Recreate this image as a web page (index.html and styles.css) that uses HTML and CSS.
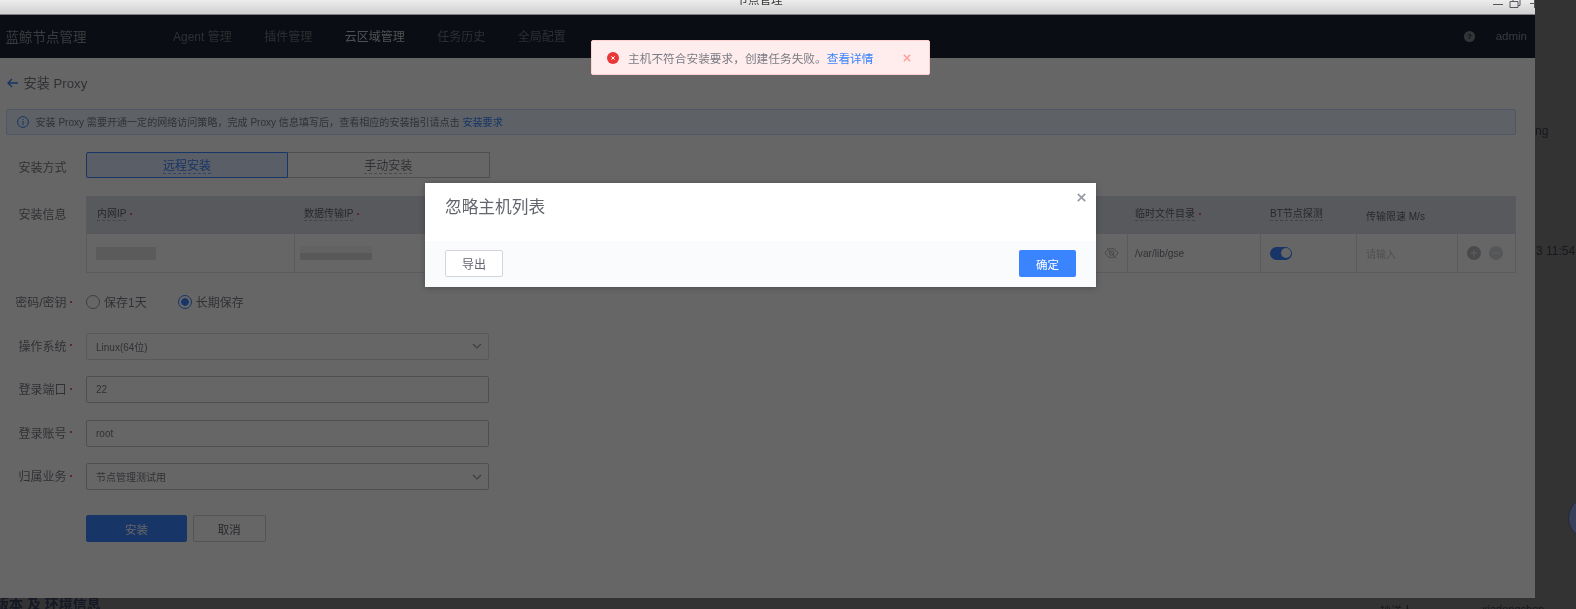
FILE: index.html
```html
<!DOCTYPE html>
<html lang="zh">
<head>
<meta charset="utf-8">
<title>节点管理</title>
<link rel="stylesheet" href="styles.css">
</head>
<body>
<div class="desk">
  <span class="bg-text bg-ng">ng</span>
  <span class="bg-text bg-time">3 11:54</span>
  <span class="bg-circle"></span>
  <span class="bg-version">版本 及 环境信息</span>
  <span class="bg-text bg-r1">抄送人</span>
  <span class="bg-text bg-r2">xiadongchen</span>

  <div class="window">
    <div class="titlebar">
      <span class="title-text">节点管理</span>
      <span class="win-controls">
        <svg width="46" height="14" viewBox="0 0 46 14"><path d="M0 4.5h10" class="wc"/><path d="M17 1.5h8v6h-8zM20 1.5v-2h7v6h-2" class="wc"/><path d="M37 3.5h9M41.5 0v8" class="wc"/></svg>
      </span>
    </div>
    <div class="app">
      <header class="topnav">
        <div class="brand">蓝鲸节点管理</div>
        <nav class="nav">
          <a>Agent 管理</a><a>插件管理</a><a class="active">云区域管理</a><a>任务历史</a><a>全局配置</a>
        </nav>
        <div class="user">
          <svg class="help" width="11" height="11" viewBox="0 0 11 11"><circle cx="5.5" cy="5.5" r="5.5" fill="#83858c"/><text x="5.5" y="8.2" text-anchor="middle" class="help-q">?</text></svg>
          <span>admin</span>
        </div>
      </header>
      <main class="main">
        <div class="page-title">
          <svg width="11" height="10" viewBox="0 0 11 10"><path d="M5 1 1 5l4 4M1 5h10" fill="none" stroke="#3a84ff" stroke-width="1.4"/></svg>
          <span>安装 Proxy</span>
        </div>
        <div class="info">
          <svg width="12" height="12" viewBox="0 0 12 12"><circle cx="6" cy="6" r="5.4" fill="none" stroke="#3a84ff"/><path d="M6 5v4M6 3v1.1" stroke="#3a84ff" stroke-width="1.1"/></svg>
          <span>安装 Proxy 需要开通一定的网络访问策略，完成 Proxy 信息填写后，查看相应的安装指引请点击 <a>安装要求</a></span>
        </div>
        <div class="row row-seg">
          <label class="lbl">安装方式</label>
          <div class="seg">
            <div class="seg-item on"><span>远程安装</span></div>
            <div class="seg-item"><span>手动安装</span></div>
          </div>
        </div>
        <div class="row row-table">
          <label class="lbl lbl-top">安装信息</label>
          <div class="table">
            <div class="th"><span class="dash req">内网IP</span></div>
            <div class="th"><span class="dash req">数据传输IP</span></div>
            <div class="th th-tight"><span class="dash req">临时文件目录</span></div>
            <div class="th"><span class="dash">BT节点探测</span></div>
            <div class="th"><span>传输限速 M/s</span></div>
            <div class="th"></div>
            <div class="td"><span class="mosaic"></span></div>
            <div class="td td-ip">
              <span class="mosaic mosaic-2"></span><span class="tick"></span>
              <svg class="eye" width="15" height="12" viewBox="0 0 15 12"><path d="M1 6c2-3 4-4.600 6.500-4.600S12 3 14 6c-2 3-4 4.600-6.500 4.600S3 9 1 6Z" fill="none" stroke="#b0b2b8"/><circle cx="7.500" cy="6" r="2.300" fill="none" stroke="#b0b2b8"/><path d="m3 1 9 10" stroke="#b0b2b8"/></svg>
            </div>
            <div class="td td-path">/var/lib/gse</div>
            <div class="td"><span class="switch"></span></div>
            <div class="td ph">请输入</div>
            <div class="td td-ops">
              <svg width="14" height="14" viewBox="0 0 14 14"><circle cx="7" cy="7" r="7" fill="#b8bac0"/><path d="M3.500 7h7M7 3.500v7" stroke="#e8e8e8"/></svg>
              <svg width="14" height="14" viewBox="0 0 14 14"><circle cx="7" cy="7" r="7" fill="#d4d6dc"/><path d="M3.500 7h7" stroke="#f2f2f2"/></svg>
            </div>
          </div>
        </div>
        <div class="row row-radio">
          <label class="lbl req">密码/密钥</label>
          <div class="radios">
            <span class="radio"><i></i>保存1天</span>
            <span class="radio checked"><i></i>长期保存</span>
          </div>
        </div>
        <div class="row row-field">
          <label class="lbl req">操作系统</label>
          <div class="field light">Linux(64位)<svg class="chev" width="10" height="6" viewBox="0 0 10 6"><path d="m1 1 4 4 4-4" fill="none" stroke="#979ba5" stroke-width="1.200"/></svg></div>
        </div>
        <div class="row row-field">
          <label class="lbl req">登录端口</label>
          <div class="field">22</div>
        </div>
        <div class="row row-field">
          <label class="lbl req">登录账号</label>
          <div class="field">root</div>
        </div>
        <div class="row row-field">
          <label class="lbl req">归属业务</label>
          <div class="field">节点管理测试用<svg class="chev" width="10" height="6" viewBox="0 0 10 6"><path d="m1 1 4 4 4-4" fill="none" stroke="#979ba5" stroke-width="1.200"/></svg></div>
        </div>
        <div class="actions">
          <button class="btn-install">安装</button>
          <button class="btn-cancel">取消</button>
        </div>
      </main>
      <div class="mask"></div>
      <div class="alert">
        <svg width="12" height="12" viewBox="0 0 12 12"><circle cx="6" cy="6" r="6" fill="#ea3636"/><path d="m4.300 4.300 3.400 3.400M7.700 4.300 4.300 7.700" stroke="#fff"/></svg>
        <span class="alert-text">主机不符合安装要求，创建任务失败。<a>查看详情</a></span>
        <svg class="alert-x" width="8" height="8" viewBox="0 0 8 8"><path d="m.8.8 6.400 6.400M7.200.8.800 7.200" stroke="#ff9c9c" stroke-width="1.500"/></svg>
      </div>
      <div class="modal">
        <svg class="modal-x" width="9" height="9" viewBox="0 0 9 9"><path d="m.8.8 7.400 7.400M8.200.8.800 8.200" stroke="#979ba5" stroke-width="1.700"/></svg>
        <div class="modal-body">忽略主机列表</div>
        <div class="modal-foot">
          <button class="m-export">导出</button>
          <button class="m-ok">确定</button>
        </div>
      </div>
    </div>
  </div>
</div>
</body>
</html>
```

FILE: styles.css
```css
* { box-sizing: border-box; }
html, body { margin: 0; padding: 0; height: 100%; overflow: hidden; }
body { font-family: "Liberation Sans", "Noto Sans CJK SC", sans-serif; font-size: 10px; color: #7a7c84; background: #333; }
a { color: #3a84ff; }
button { font-family: inherit; padding: 0; cursor: pointer; }

.desk { position: relative; width: 1576px; height: 609px; overflow: hidden; background: #333; filter: blur(.55px); }
.bg-text { position: absolute; color: #17181c; font-size: 12px; white-space: nowrap; }
.bg-ng { left: 1535px; top: 124px; }
.bg-time { left: 1536px; top: 244px; }
.bg-r1 { left: 1380px; top: 602px; font-size: 11px; }
.bg-r2 { left: 1482px; top: 603px; font-size: 11px; }
.bg-circle { position: absolute; left: 1568px; top: 496px; width: 44px; height: 44px; border-radius: 50%; background: #39415a; border: 1px solid #232738; }
.bg-version { position: absolute; left: -5px; top: 593px; font-size: 14px; font-weight: 700; color: #131824; white-space: nowrap; }

.window { position: relative; width: 1535px; height: 598px; display: flex; flex-direction: column; overflow: hidden; }
.titlebar { flex: 0 0 15px; display: flex; justify-content: center; background: linear-gradient(#ededed, #cfcfcf); border-bottom: 1px solid #808080; overflow: hidden; padding-right: 16px; position: relative; }
.title-text { font-size: 11.500px; line-height: 11px; margin-top: -5px; color: #333; }
.win-controls { position: absolute; left: 1493px; top: 0; line-height: 0; }
.wc { fill: none; stroke: #55575c; stroke-width: 1; }

.app { position: relative; flex: 1; background: #fff; display: flex; flex-direction: column; min-height: 0; }
.mask { position: absolute; inset: 0; background: rgba(0, 0, 0, .6); }

.topnav { flex: 0 0 43px; display: flex; align-items: center; background: #1a2232; color: #979ba5; padding: 0 8px 2px 5.500px; }
.brand { width: 167.500px; font-size: 13.500px; color: #8f9198; }
.nav { display: flex; gap: 32.500px; font-size: 12px; }
.nav a { color: #70737b; }
.nav a.active { color: #c6c8ce; }
.user { margin-left: auto; display: flex; align-items: center; gap: 21px; font-size: 11.500px; color: #8d9098; }
.help { margin-top: 1px; }
.help-q { font-size: 8px; font-weight: 700; fill: #1a2232; }

.main { padding: 0 19px 0 6px; flex: 1; }
.page-title { height: 50.700px; display: flex; align-items: center; gap: 5.500px; padding: 0 0 1px 1px; font-size: 13.200px; color: #7a7c84; }
.info { height: 26.300px; display: flex; align-items: center; gap: 6.500px; padding-left: 10px; background: #ebf4ff; border: 1px solid #c5daff; border-radius: 2px; font-size: 10.050px; color: #7a7c84; }
.row { display: flex; align-items: center; }
.lbl { flex: 0 0 60.500px; position: relative; text-align: right; font-size: 12px; color: #7a7c84; margin-right: 19.500px; white-space: nowrap; top: -1px; }
.req.lbl::after, .dash.req::after { content: ""; position: absolute; width: 2px; height: 2px; border-radius: 50%; background: #ea3636; }
.req.lbl::after { left: 63.500px; top: 7.500px; }
.row-seg { margin-top: 17px; }
.row-seg .lbl { top: 1px; }
.seg { width: 403.500px; height: 26.500px; display: flex; }
.seg-item { flex: 1; display: flex; align-items: center; justify-content: center; border: 1px solid #c4c6cc; font-size: 12px; border-left: 0; padding-top: 2px; }
.seg-item span { border-bottom: 1px dashed #b7b9c0; line-height: 14px; }
.seg-item.on { flex: 0 0 202px; background: #e1ecff; border: 1px solid #3a84ff; color: #3a84ff; border-radius: 2px 0 0 2px; }
.seg-item.on span { border-color: #7aabff; }

.row-table { margin-top: 17.500px; align-items: flex-start; }
.lbl-top { margin-top: 9px; top: 0; }
.table { flex: 1; display: grid; grid-template-columns: 207px 833px 133px 96px 101px 1fr; grid-template-rows: 38.500px 37.500px; border: 1px solid #e3e4e8; border-top: 0; }
.th { background: #dcdee5; display: flex; align-items: center; padding-left: 10px; font-size: 10px; color: #63656e; }
.th-tight { padding-left: 8px; }
.dash { position: relative; border-bottom: 1px dashed #a8aab2; line-height: 13px; margin-top: -2px; }
.dash.req::after { left: calc(100% + 4px); top: 6px; }
.td { display: flex; align-items: center; padding-left: 9px; border-left: 1px solid #e3e4e8; font-size: 10px; }
.td:nth-child(7) { border-left: 0; }
.td-path { padding-left: 7px; font-size: 10.200px; }
.ph { color: #c4c6cc; }
.mosaic { display: block; width: 60px; height: 13px; background: #e4e4e4; }
.mosaic-2 { width: 72px; height: 14px; margin-left: -4px; background: linear-gradient(#f5f5f5 0 50%, #dcdcdc 50%); }
.td-ip { position: relative; }
.tick { position: absolute; left: 125px; top: 10px; width: 1px; height: 8px; background: #fff; }
.eye { margin-left: auto; margin-right: 8px; }
.switch { position: relative; width: 22px; height: 13px; border-radius: 7px; background: #3a84ff; }
.switch::after { content: ""; position: absolute; right: 1.500px; top: 1.500px; width: 10px; height: 10px; border-radius: 50%; background: #fff; }
.td-ops { gap: 8px; padding-left: 9px; }

.row-radio { height: 24px; margin-top: 17px; }
.row-radio .lbl { top: 0; }
.radios { display: flex; gap: 31px; font-size: 12px; }
.radio { display: flex; align-items: center; gap: 4px; }
.radio i { width: 14px; height: 14px; border: 1px solid #979ba5; border-radius: 50%; background: #fff; }
.radio.checked i { border-color: #3a84ff; background: radial-gradient(circle, #3a84ff 0 3.500px, #fff 4px); }

.row-field { margin-top: 16.500px; }
.row-radio + .row-field { margin-top: 19px; }
.field { position: relative; width: 403px; height: 27px; display: flex; align-items: center; justify-content: space-between; padding: 0 6px 0 9px; border: 1px solid #c4c6cc; border-radius: 2px; font-size: 10px; }
.field.light { border-color: #dcdee5; }
.chev { flex: none; }

.actions { display: flex; gap: 6px; margin: 25px 0 0 80px; }
.btn-install { width: 101px; height: 27px; border: 1px solid #3a84ff; border-radius: 2px; background: #3a84ff; color: #fff; font-size: 11.500px; }
.btn-cancel { width: 72.500px; height: 27px; border: 1px solid #d0d2d8; border-radius: 2px; background: #fff; color: #63656e; font-size: 11.500px; }

.alert { position: absolute; left: 591px; top: 25px; width: 339px; height: 35px; display: flex; align-items: center; padding-left: 15px; background: #ffeded; border: 1px solid #ffd2d2; border-radius: 2px; font-size: 11.700px; color: #7a7c84; }
.alert-text { margin-left: 9px; }
.alert-x { margin-left: 30px; }

.modal { position: absolute; left: 425px; top: 167.500px; width: 671px; height: 104.500px; display: flex; flex-direction: column; background: #fff; box-shadow: 0 1px 6px rgba(0, 0, 0, .25); }
.modal-x { position: absolute; right: 10px; top: 10px; }
.modal-body { flex: 0 0 58px; padding: 15px 0 0 20px; font-size: 16.700px; line-height: 20px; color: #63656e; }
.modal-foot { flex: 1; display: flex; justify-content: space-between; align-items: flex-start; padding: 9.500px 20px 0 20px; background: #fafbfd; }
.m-export { width: 58px; height: 27px; border: 1px solid #d4d6dc; border-radius: 2px; background: #fff; color: #63656e; font-size: 12px; }
.m-ok { width: 57px; height: 27px; border: 0; border-radius: 2px; background: #3a84ff; color: #fff; font-size: 11.500px; }
```
